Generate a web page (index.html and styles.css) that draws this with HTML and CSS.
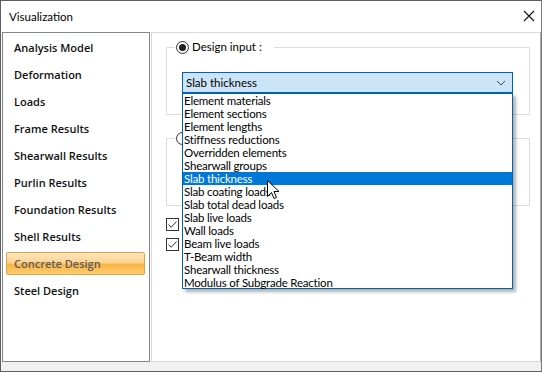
FILE: index.html
```html
<!DOCTYPE html>
<html lang="en">
<head>
  <meta charset="UTF-8">
  <title>Visualization</title>
  <link rel="stylesheet" href="styles.css">
</head>
<body>
  <div class="window">
    <div class="titlebar">
      <span class="title">Visualization</span>
      <svg class="close" width="12" height="12" viewBox="0 0 12 12">
        <path d="M1 1 L11 11 M11 1 L1 11" stroke="#111" stroke-width="1.1" fill="none"/>
      </svg>
    </div>
    <div class="main">
      <ul class="nav">
        <li>Analysis Model</li>
        <li>Deformation</li>
        <li>Loads</li>
        <li>Frame Results</li>
        <li>Shearwall Results</li>
        <li>Purlin Results</li>
        <li>Foundation Results</li>
        <li>Shell Results</li>
        <li class="active">Concrete Design</li>
        <li>Steel Design</li>
      </ul>
      <div class="pane">
        <fieldset class="group">
          <legend><span class="radio checked"></span>Design input :</legend>
          <div class="combo">
            <span>Slab thickness</span>
            <svg width="10" height="6" viewBox="0 0 10 6">
              <path d="M1 1 L5 5 L9 1" stroke="#444" stroke-width="1" fill="none"/>
            </svg>
          </div>
        </fieldset>
        <fieldset class="group group-second">
          <legend><span class="radio"></span></legend>
        </fieldset>
        <div class="checks">
          <span class="box">
            <svg width="11" height="11" viewBox="0 0 11 11"><path d="M1.5 5.5 L4.2 8.3 L9.5 2.5" stroke="#333" stroke-width="1" fill="none"/></svg>
          </span>
          <span class="box">
            <svg width="11" height="11" viewBox="0 0 11 11"><path d="M1.5 5.5 L4.2 8.3 L9.5 2.5" stroke="#333" stroke-width="1" fill="none"/></svg>
          </span>
        </div>

        <!-- open dropdown list -->
        <ul class="dropdown">
          <li>Element materials</li>
          <li>Element sections</li>
          <li>Element lengths</li>
          <li>Stiffness reductions</li>
          <li>Overridden elements</li>
          <li>Shearwall groups</li>
          <li class="selected">Slab thickness</li>
          <li>Slab coating loads</li>
          <li>Slab total dead loads</li>
          <li>Slab live loads</li>
          <li>Wall loads</li>
          <li>Beam live loads</li>
          <li>T-Beam width</li>
          <li>Shearwall thickness</li>
          <li>Modulus of Subgrade Reaction</li>
        </ul>
        <svg class="cursor" width="13" height="20" viewBox="0 0 13 20">
          <path d="M0.5 0.5 L0.5 16.5 L4.5 12.5 L7 18.5 L9.5 17.5 L7 11.5 L12 11.5 Z" fill="#fff" stroke="#000" stroke-width="1"/>
        </svg>
      </div>
    </div>
  </div>
</body>
</html>
```

FILE: styles.css
```css
body {
  margin: 0;
  padding: 0;
  font-family: Lato, 'Noto Sans', sans-serif;
  font-size: 11.5px;
  color: #000;
}
.window {
  width: 542px;
  height: 372px;
  box-sizing: border-box;
  border: 1px solid #5f5f5f;
  border-right-color: #7a7a7a;
  background: #f0f0f0;
}
.titlebar {
  height: 30px;
  background: #fff;
  display: flex;
  align-items: center;
  justify-content: space-between;
  padding: 0 6px 0 8px;
}
.title {
  font-size: 11.5px;
  color: #000;
}
.main {
  display: flex;
  gap: 1px;
  padding: 1px 0 0 1px;
  background: #fff;
  height: 330px;
}
.nav {
  list-style: none;
  margin: 0;
  padding: 3px 4px 0 3px;
  width: 148px;
  height: 330px;
  box-sizing: border-box;
  border: 1px solid #82858a;
  background: #fff;
}
.nav li {
  height: 23px;
  line-height: 21px;
  box-sizing: border-box;
  border: 1px solid transparent;
  padding-left: 7px;
  margin-bottom: 4px;
  font-family: 'Open Sans', 'Noto Sans', sans-serif;
  font-weight: 600;
  font-size: 11px;
  color: #111;
}
.nav li.active {
  border-color: #d8a64e;
  border-radius: 2px;
  background: linear-gradient(#fde6bd 0%, #fdd391 45%, #f9b443 55%, #fbcd72 100%);
  color: #5c5c5c;
}
.pane {
  position: relative;
  width: 390px;
  height: 330px;
  box-sizing: border-box;
  border: 1px solid #d9d9d9;
  border-right-color: #a8a8a8;
  background: #fff;
  padding: 7px 0 0 14px;
}
.group {
  margin: 0;
  padding: 0 0 0 8px;
  width: 364px;
  height: 75px;
  box-sizing: border-box;
  border: 1px solid #dcdcdc;
  min-width: 0;
}
.group legend {
  padding: 0 1px;
  height: 14px;
  line-height: 14px;
  display: flex;
  align-items: center;
  gap: 3px;
}
.group:first-child legend {
  width: 99px;
  box-sizing: border-box;
}
.group-second {
  margin-top: 16px;
}
.radio {
  width: 13px;
  height: 13px;
  box-sizing: border-box;
  border: 1px solid #333;
  border-radius: 50%;
  background: #fff;
  display: inline-flex;
  align-items: center;
  justify-content: center;
}
.radio.checked::after {
  content: "";
  width: 7px;
  height: 7px;
  border-radius: 50%;
  background: #222;
}
.combo {
  margin: 18px 0 0 7px;
  width: 331px;
  height: 21px;
  box-sizing: border-box;
  border: 1px solid #0063b1;
  background: #cce4f7;
  display: flex;
  align-items: center;
  justify-content: space-between;
  padding: 0 6px 0 3px;
}
.checks {
  margin-top: 12px;
  display: flex;
  flex-direction: column;
  gap: 7px;
}
.box {
  display: block;
  width: 13px;
  height: 13px;
  box-sizing: border-box;
  border: 1px solid #333;
  background: #fff;
}
.box svg {
  display: block;
}
.dropdown {
  position: absolute;
  left: 30px;
  top: 60px;
  width: 331px;
  height: 196px;
  box-sizing: border-box;
  margin: 0;
  padding: 0;
  list-style: none;
  border: 1px solid #0063b1;
  background: #fff;
  box-shadow: 3px 3px 3px rgba(0,0,0,0.3);
}
.dropdown li {
  height: 13px;
  line-height: 13px;
  padding-left: 1px;
  white-space: nowrap;
  font-size: 11.5px;
  letter-spacing: -0.2px;
}
.dropdown li.selected {
  background: #0078d7;
  color: #fff;
}
.cursor {
  position: absolute;
  left: 115px;
  top: 147px;
}
```
